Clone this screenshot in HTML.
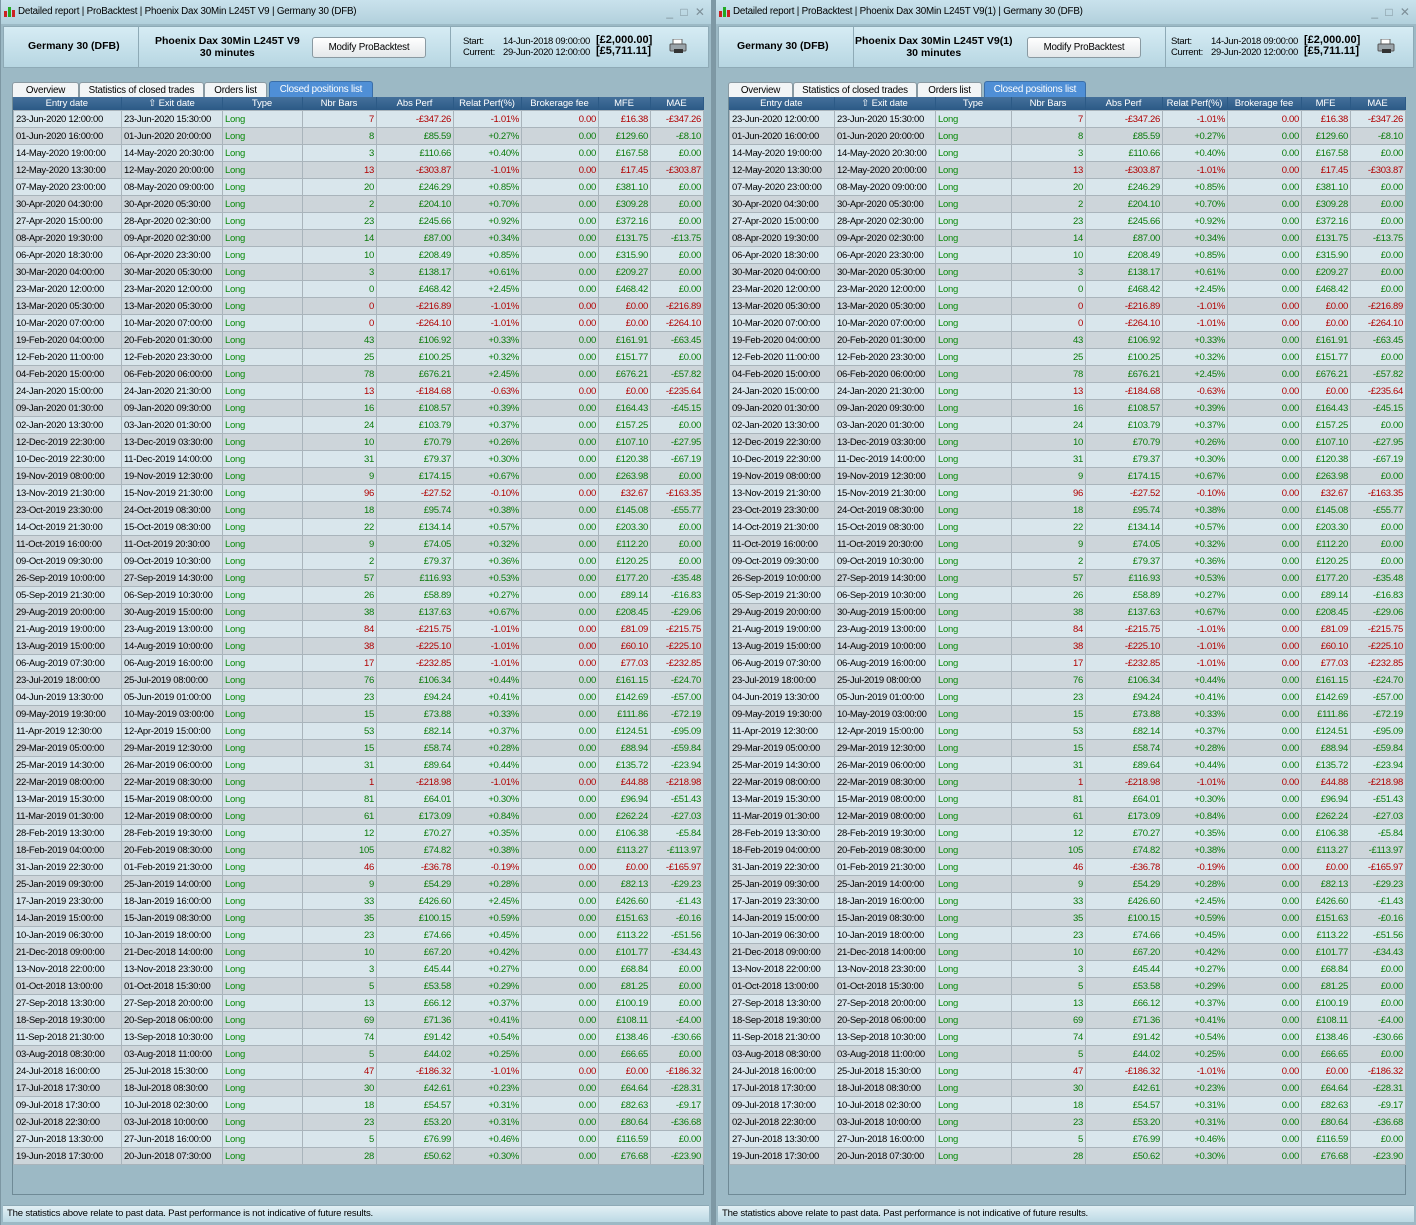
<!DOCTYPE html>
<html><head><meta charset="utf-8"><style>
*{box-sizing:border-box;margin:0;padding:0}
body{width:1416px;height:1225px;background:#9cb9c5;font-family:"Liberation Sans",sans-serif;font-size:9.5px;letter-spacing:-0.3px;color:#000;position:relative;overflow:hidden}
.pan{position:absolute;top:0;height:1225px;background:#9cb9c5;border-left:1px solid #7d97a3}
.tb{position:absolute;left:0;right:0;top:0;height:24px;background:linear-gradient(#c9e2ec,#b2d0dc);font-size:9.8px;letter-spacing:-0.2px;line-height:24px;padding-left:17px;white-space:nowrap}
.tb .ic{position:absolute;left:3px;top:7px;width:10px;height:10px}
.tb .ic i{position:absolute;bottom:0;width:3px}
.tb .wc{position:absolute;right:4px;top:0;color:#7d8f98;font-size:12px;letter-spacing:2px}
.hd{position:absolute;left:2px;right:2px;top:26px;height:42px;background:linear-gradient(#d6ecf4,#b7d6e2);border:1px solid #8eaab6}
.hd .s{position:absolute;top:0;bottom:0;border-right:1px solid #8eaab6}
.b{font-weight:bold;font-size:10.5px;letter-spacing:0}
.btn{position:absolute;top:10px;width:114px;height:21px;background:linear-gradient(#fff,#e4e8ea);border:1px solid #8a9aa2;border-radius:3px;text-align:center;line-height:19px;font-size:9.8px;letter-spacing:-0.2px}
.tabs{position:absolute;top:81px;height:17px}
.tab{position:absolute;top:1px;height:16px;background:#f2f5f6;border:1px solid #8a9aa2;border-bottom:none;border-radius:3px 3px 0 0;text-align:center;line-height:15px;font-size:9.8px;letter-spacing:-0.2px}
.tab.on{top:0;height:17px;background:#4f8fd6;color:#fff;border-color:#3a6ea8}
.box{position:absolute;top:97px;height:1098px;border:1px solid #6f8a96;border-top:none}
table{border-collapse:collapse;table-layout:fixed;font-size:9.5px;letter-spacing:-0.3px}
th{background:linear-gradient(#44709b,#2c5a86);color:#fff;font-weight:normal;height:13px;line-height:12px;padding:0;border-right:1px solid #2c5a86;white-space:nowrap;overflow:hidden;letter-spacing:-0.1px}
td{height:17px;border:1px solid #a9b4bb;padding:0 2px;white-space:nowrap;overflow:hidden;line-height:15px}
tr:nth-child(odd) td{background:#d9e6ec}
tr:nth-child(even) td{background:#cdd5da}
td:nth-child(n+4){text-align:right}
td:nth-child(3){color:#0a8a0a}
tr.g td:nth-child(n+4){color:#0a7a0a}
tr.r td:nth-child(n+4){color:#b00000}
.ft{position:absolute;left:2px;right:2px;top:1205px;height:17px;background:linear-gradient(#e2f0f5,#bcd9e4);border-top:1px solid #8eaab6;font-size:9.6px;letter-spacing:-0.2px;line-height:16px;padding-left:4px}
.pr{position:absolute;width:18px;height:14px}
.amt{position:absolute;font-weight:bold;font-size:11px;line-height:11px;letter-spacing:0}
.sm{position:absolute;top:9px;font-size:9.5px;line-height:11px}
</style></head><body>

<!-- LEFT PANEL -->
<div class="pan" style="left:0;width:711px">
 <div class="tb"><span class="ic"><i style="left:0;height:6px;background:#c22"></i><i style="left:4px;height:10px;background:#2a2"></i><i style="left:8px;height:7px;background:#c22"></i></span>Detailed report | ProBacktest | Phoenix Dax 30Min L245T V9 | Germany 30 (DFB)<span class="wc">_ □ ✕</span></div>
 <div class="hd">
  <div class="s" style="left:0;width:135px"><div class="b" style="position:absolute;left:24px;top:13px">Germany 30 (DFB)</div></div>
  <div class="s" style="left:135px;width:312px"><div class="b" style="position:absolute;left:16px;top:8px;text-align:center;line-height:12px">Phoenix Dax 30Min L245T V9<br>30 minutes</div><div class="btn" style="left:173px">Modify ProBacktest</div></div>
  <div class="sm" style="left:459px">Start:<br>Current:</div>
  <div class="sm" style="left:499px">14-Jun-2018 09:00:00<br>29-Jun-2020 12:00:00</div>
  <div class="amt" style="left:592px;top:8px">[£2,000.00]<br>[£5,711.11]</div>
  <svg class="pr" style="left:665px;top:12px" viewBox="0 0 18 14"><rect x="4" y="0" width="9" height="5" fill="#fff" stroke="#666"/><rect x="1" y="5" width="16" height="7" rx="1" fill="#9aa4aa" stroke="#555"/><rect x="5" y="10" width="9" height="4" fill="#333"/></svg>
 </div>
 <div class="tabs" style="left:11px">
  <div class="tab" style="left:0;width:67px">Overview</div>
  <div class="tab" style="left:67px;width:125px">Statistics of closed trades</div>
  <div class="tab" style="left:192px;width:63px">Orders list</div>
  <div class="tab on" style="left:257px;width:104px">Closed positions list</div>
 </div>
 <div class="box" style="left:11px;width:692px">
 <table style="width:690px">
 <colgroup><col style="width:108px"><col style="width:101px"><col style="width:80px"><col style="width:74px"><col style="width:77px"><col style="width:68px"><col style="width:77px"><col style="width:52px"><col style="width:53px"></colgroup>
 <tr><th>Entry date</th><th>⇧ Exit date</th><th>Type</th><th>Nbr Bars</th><th>Abs Perf</th><th>Relat Perf(%)</th><th>Brokerage fee</th><th>MFE</th><th>MAE</th></tr>
 </table>
 <table style="width:690px">
 <colgroup><col style="width:108px"><col style="width:101px"><col style="width:80px"><col style="width:74px"><col style="width:77px"><col style="width:68px"><col style="width:77px"><col style="width:52px"><col style="width:53px"></colgroup>
<tr class="r"><td>23-Jun-2020 12:00:00</td><td>23-Jun-2020 15:30:00</td><td>Long</td><td>7</td><td>-£347.26</td><td>-1.01%</td><td>0.00</td><td>£16.38</td><td>-£347.26</td></tr>
<tr class="g"><td>01-Jun-2020 16:00:00</td><td>01-Jun-2020 20:00:00</td><td>Long</td><td>8</td><td>£85.59</td><td>+0.27%</td><td>0.00</td><td>£129.60</td><td>-£8.10</td></tr>
<tr class="g"><td>14-May-2020 19:00:00</td><td>14-May-2020 20:30:00</td><td>Long</td><td>3</td><td>£110.66</td><td>+0.40%</td><td>0.00</td><td>£167.58</td><td>£0.00</td></tr>
<tr class="r"><td>12-May-2020 13:30:00</td><td>12-May-2020 20:00:00</td><td>Long</td><td>13</td><td>-£303.87</td><td>-1.01%</td><td>0.00</td><td>£17.45</td><td>-£303.87</td></tr>
<tr class="g"><td>07-May-2020 23:00:00</td><td>08-May-2020 09:00:00</td><td>Long</td><td>20</td><td>£246.29</td><td>+0.85%</td><td>0.00</td><td>£381.10</td><td>£0.00</td></tr>
<tr class="g"><td>30-Apr-2020 04:30:00</td><td>30-Apr-2020 05:30:00</td><td>Long</td><td>2</td><td>£204.10</td><td>+0.70%</td><td>0.00</td><td>£309.28</td><td>£0.00</td></tr>
<tr class="g"><td>27-Apr-2020 15:00:00</td><td>28-Apr-2020 02:30:00</td><td>Long</td><td>23</td><td>£245.66</td><td>+0.92%</td><td>0.00</td><td>£372.16</td><td>£0.00</td></tr>
<tr class="g"><td>08-Apr-2020 19:30:00</td><td>09-Apr-2020 02:30:00</td><td>Long</td><td>14</td><td>£87.00</td><td>+0.34%</td><td>0.00</td><td>£131.75</td><td>-£13.75</td></tr>
<tr class="g"><td>06-Apr-2020 18:30:00</td><td>06-Apr-2020 23:30:00</td><td>Long</td><td>10</td><td>£208.49</td><td>+0.85%</td><td>0.00</td><td>£315.90</td><td>£0.00</td></tr>
<tr class="g"><td>30-Mar-2020 04:00:00</td><td>30-Mar-2020 05:30:00</td><td>Long</td><td>3</td><td>£138.17</td><td>+0.61%</td><td>0.00</td><td>£209.27</td><td>£0.00</td></tr>
<tr class="g"><td>23-Mar-2020 12:00:00</td><td>23-Mar-2020 12:00:00</td><td>Long</td><td>0</td><td>£468.42</td><td>+2.45%</td><td>0.00</td><td>£468.42</td><td>£0.00</td></tr>
<tr class="r"><td>13-Mar-2020 05:30:00</td><td>13-Mar-2020 05:30:00</td><td>Long</td><td>0</td><td>-£216.89</td><td>-1.01%</td><td>0.00</td><td>£0.00</td><td>-£216.89</td></tr>
<tr class="r"><td>10-Mar-2020 07:00:00</td><td>10-Mar-2020 07:00:00</td><td>Long</td><td>0</td><td>-£264.10</td><td>-1.01%</td><td>0.00</td><td>£0.00</td><td>-£264.10</td></tr>
<tr class="g"><td>19-Feb-2020 04:00:00</td><td>20-Feb-2020 01:30:00</td><td>Long</td><td>43</td><td>£106.92</td><td>+0.33%</td><td>0.00</td><td>£161.91</td><td>-£63.45</td></tr>
<tr class="g"><td>12-Feb-2020 11:00:00</td><td>12-Feb-2020 23:30:00</td><td>Long</td><td>25</td><td>£100.25</td><td>+0.32%</td><td>0.00</td><td>£151.77</td><td>£0.00</td></tr>
<tr class="g"><td>04-Feb-2020 15:00:00</td><td>06-Feb-2020 06:00:00</td><td>Long</td><td>78</td><td>£676.21</td><td>+2.45%</td><td>0.00</td><td>£676.21</td><td>-£57.82</td></tr>
<tr class="r"><td>24-Jan-2020 15:00:00</td><td>24-Jan-2020 21:30:00</td><td>Long</td><td>13</td><td>-£184.68</td><td>-0.63%</td><td>0.00</td><td>£0.00</td><td>-£235.64</td></tr>
<tr class="g"><td>09-Jan-2020 01:30:00</td><td>09-Jan-2020 09:30:00</td><td>Long</td><td>16</td><td>£108.57</td><td>+0.39%</td><td>0.00</td><td>£164.43</td><td>-£45.15</td></tr>
<tr class="g"><td>02-Jan-2020 13:30:00</td><td>03-Jan-2020 01:30:00</td><td>Long</td><td>24</td><td>£103.79</td><td>+0.37%</td><td>0.00</td><td>£157.25</td><td>£0.00</td></tr>
<tr class="g"><td>12-Dec-2019 22:30:00</td><td>13-Dec-2019 03:30:00</td><td>Long</td><td>10</td><td>£70.79</td><td>+0.26%</td><td>0.00</td><td>£107.10</td><td>-£27.95</td></tr>
<tr class="g"><td>10-Dec-2019 22:30:00</td><td>11-Dec-2019 14:00:00</td><td>Long</td><td>31</td><td>£79.37</td><td>+0.30%</td><td>0.00</td><td>£120.38</td><td>-£67.19</td></tr>
<tr class="g"><td>19-Nov-2019 08:00:00</td><td>19-Nov-2019 12:30:00</td><td>Long</td><td>9</td><td>£174.15</td><td>+0.67%</td><td>0.00</td><td>£263.98</td><td>£0.00</td></tr>
<tr class="r"><td>13-Nov-2019 21:30:00</td><td>15-Nov-2019 21:30:00</td><td>Long</td><td>96</td><td>-£27.52</td><td>-0.10%</td><td>0.00</td><td>£32.67</td><td>-£163.35</td></tr>
<tr class="g"><td>23-Oct-2019 23:30:00</td><td>24-Oct-2019 08:30:00</td><td>Long</td><td>18</td><td>£95.74</td><td>+0.38%</td><td>0.00</td><td>£145.08</td><td>-£55.77</td></tr>
<tr class="g"><td>14-Oct-2019 21:30:00</td><td>15-Oct-2019 08:30:00</td><td>Long</td><td>22</td><td>£134.14</td><td>+0.57%</td><td>0.00</td><td>£203.30</td><td>£0.00</td></tr>
<tr class="g"><td>11-Oct-2019 16:00:00</td><td>11-Oct-2019 20:30:00</td><td>Long</td><td>9</td><td>£74.05</td><td>+0.32%</td><td>0.00</td><td>£112.20</td><td>£0.00</td></tr>
<tr class="g"><td>09-Oct-2019 09:30:00</td><td>09-Oct-2019 10:30:00</td><td>Long</td><td>2</td><td>£79.37</td><td>+0.36%</td><td>0.00</td><td>£120.25</td><td>£0.00</td></tr>
<tr class="g"><td>26-Sep-2019 10:00:00</td><td>27-Sep-2019 14:30:00</td><td>Long</td><td>57</td><td>£116.93</td><td>+0.53%</td><td>0.00</td><td>£177.20</td><td>-£35.48</td></tr>
<tr class="g"><td>05-Sep-2019 21:30:00</td><td>06-Sep-2019 10:30:00</td><td>Long</td><td>26</td><td>£58.89</td><td>+0.27%</td><td>0.00</td><td>£89.14</td><td>-£16.83</td></tr>
<tr class="g"><td>29-Aug-2019 20:00:00</td><td>30-Aug-2019 15:00:00</td><td>Long</td><td>38</td><td>£137.63</td><td>+0.67%</td><td>0.00</td><td>£208.45</td><td>-£29.06</td></tr>
<tr class="r"><td>21-Aug-2019 19:00:00</td><td>23-Aug-2019 13:00:00</td><td>Long</td><td>84</td><td>-£215.75</td><td>-1.01%</td><td>0.00</td><td>£81.09</td><td>-£215.75</td></tr>
<tr class="r"><td>13-Aug-2019 15:00:00</td><td>14-Aug-2019 10:00:00</td><td>Long</td><td>38</td><td>-£225.10</td><td>-1.01%</td><td>0.00</td><td>£60.10</td><td>-£225.10</td></tr>
<tr class="r"><td>06-Aug-2019 07:30:00</td><td>06-Aug-2019 16:00:00</td><td>Long</td><td>17</td><td>-£232.85</td><td>-1.01%</td><td>0.00</td><td>£77.03</td><td>-£232.85</td></tr>
<tr class="g"><td>23-Jul-2019 18:00:00</td><td>25-Jul-2019 08:00:00</td><td>Long</td><td>76</td><td>£106.34</td><td>+0.44%</td><td>0.00</td><td>£161.15</td><td>-£24.70</td></tr>
<tr class="g"><td>04-Jun-2019 13:30:00</td><td>05-Jun-2019 01:00:00</td><td>Long</td><td>23</td><td>£94.24</td><td>+0.41%</td><td>0.00</td><td>£142.69</td><td>-£57.00</td></tr>
<tr class="g"><td>09-May-2019 19:30:00</td><td>10-May-2019 03:00:00</td><td>Long</td><td>15</td><td>£73.88</td><td>+0.33%</td><td>0.00</td><td>£111.86</td><td>-£72.19</td></tr>
<tr class="g"><td>11-Apr-2019 12:30:00</td><td>12-Apr-2019 15:00:00</td><td>Long</td><td>53</td><td>£82.14</td><td>+0.37%</td><td>0.00</td><td>£124.51</td><td>-£95.09</td></tr>
<tr class="g"><td>29-Mar-2019 05:00:00</td><td>29-Mar-2019 12:30:00</td><td>Long</td><td>15</td><td>£58.74</td><td>+0.28%</td><td>0.00</td><td>£88.94</td><td>-£59.84</td></tr>
<tr class="g"><td>25-Mar-2019 14:30:00</td><td>26-Mar-2019 06:00:00</td><td>Long</td><td>31</td><td>£89.64</td><td>+0.44%</td><td>0.00</td><td>£135.72</td><td>-£23.94</td></tr>
<tr class="r"><td>22-Mar-2019 08:00:00</td><td>22-Mar-2019 08:30:00</td><td>Long</td><td>1</td><td>-£218.98</td><td>-1.01%</td><td>0.00</td><td>£44.88</td><td>-£218.98</td></tr>
<tr class="g"><td>13-Mar-2019 15:30:00</td><td>15-Mar-2019 08:00:00</td><td>Long</td><td>81</td><td>£64.01</td><td>+0.30%</td><td>0.00</td><td>£96.94</td><td>-£51.43</td></tr>
<tr class="g"><td>11-Mar-2019 01:30:00</td><td>12-Mar-2019 08:00:00</td><td>Long</td><td>61</td><td>£173.09</td><td>+0.84%</td><td>0.00</td><td>£262.24</td><td>-£27.03</td></tr>
<tr class="g"><td>28-Feb-2019 13:30:00</td><td>28-Feb-2019 19:30:00</td><td>Long</td><td>12</td><td>£70.27</td><td>+0.35%</td><td>0.00</td><td>£106.38</td><td>-£5.84</td></tr>
<tr class="g"><td>18-Feb-2019 04:00:00</td><td>20-Feb-2019 08:30:00</td><td>Long</td><td>105</td><td>£74.82</td><td>+0.38%</td><td>0.00</td><td>£113.27</td><td>-£113.97</td></tr>
<tr class="r"><td>31-Jan-2019 22:30:00</td><td>01-Feb-2019 21:30:00</td><td>Long</td><td>46</td><td>-£36.78</td><td>-0.19%</td><td>0.00</td><td>£0.00</td><td>-£165.97</td></tr>
<tr class="g"><td>25-Jan-2019 09:30:00</td><td>25-Jan-2019 14:00:00</td><td>Long</td><td>9</td><td>£54.29</td><td>+0.28%</td><td>0.00</td><td>£82.13</td><td>-£29.23</td></tr>
<tr class="g"><td>17-Jan-2019 23:30:00</td><td>18-Jan-2019 16:00:00</td><td>Long</td><td>33</td><td>£426.60</td><td>+2.45%</td><td>0.00</td><td>£426.60</td><td>-£1.43</td></tr>
<tr class="g"><td>14-Jan-2019 15:00:00</td><td>15-Jan-2019 08:30:00</td><td>Long</td><td>35</td><td>£100.15</td><td>+0.59%</td><td>0.00</td><td>£151.63</td><td>-£0.16</td></tr>
<tr class="g"><td>10-Jan-2019 06:30:00</td><td>10-Jan-2019 18:00:00</td><td>Long</td><td>23</td><td>£74.66</td><td>+0.45%</td><td>0.00</td><td>£113.22</td><td>-£51.56</td></tr>
<tr class="g"><td>21-Dec-2018 09:00:00</td><td>21-Dec-2018 14:00:00</td><td>Long</td><td>10</td><td>£67.20</td><td>+0.42%</td><td>0.00</td><td>£101.77</td><td>-£34.43</td></tr>
<tr class="g"><td>13-Nov-2018 22:00:00</td><td>13-Nov-2018 23:30:00</td><td>Long</td><td>3</td><td>£45.44</td><td>+0.27%</td><td>0.00</td><td>£68.84</td><td>£0.00</td></tr>
<tr class="g"><td>01-Oct-2018 13:00:00</td><td>01-Oct-2018 15:30:00</td><td>Long</td><td>5</td><td>£53.58</td><td>+0.29%</td><td>0.00</td><td>£81.25</td><td>£0.00</td></tr>
<tr class="g"><td>27-Sep-2018 13:30:00</td><td>27-Sep-2018 20:00:00</td><td>Long</td><td>13</td><td>£66.12</td><td>+0.37%</td><td>0.00</td><td>£100.19</td><td>£0.00</td></tr>
<tr class="g"><td>18-Sep-2018 19:30:00</td><td>20-Sep-2018 06:00:00</td><td>Long</td><td>69</td><td>£71.36</td><td>+0.41%</td><td>0.00</td><td>£108.11</td><td>-£4.00</td></tr>
<tr class="g"><td>11-Sep-2018 21:30:00</td><td>13-Sep-2018 10:30:00</td><td>Long</td><td>74</td><td>£91.42</td><td>+0.54%</td><td>0.00</td><td>£138.46</td><td>-£30.66</td></tr>
<tr class="g"><td>03-Aug-2018 08:30:00</td><td>03-Aug-2018 11:00:00</td><td>Long</td><td>5</td><td>£44.02</td><td>+0.25%</td><td>0.00</td><td>£66.65</td><td>£0.00</td></tr>
<tr class="r"><td>24-Jul-2018 16:00:00</td><td>25-Jul-2018 15:30:00</td><td>Long</td><td>47</td><td>-£186.32</td><td>-1.01%</td><td>0.00</td><td>£0.00</td><td>-£186.32</td></tr>
<tr class="g"><td>17-Jul-2018 17:30:00</td><td>18-Jul-2018 08:30:00</td><td>Long</td><td>30</td><td>£42.61</td><td>+0.23%</td><td>0.00</td><td>£64.64</td><td>-£28.31</td></tr>
<tr class="g"><td>09-Jul-2018 17:30:00</td><td>10-Jul-2018 02:30:00</td><td>Long</td><td>18</td><td>£54.57</td><td>+0.31%</td><td>0.00</td><td>£82.63</td><td>-£9.17</td></tr>
<tr class="g"><td>02-Jul-2018 22:30:00</td><td>03-Jul-2018 10:00:00</td><td>Long</td><td>23</td><td>£53.20</td><td>+0.31%</td><td>0.00</td><td>£80.64</td><td>-£36.68</td></tr>
<tr class="g"><td>27-Jun-2018 13:30:00</td><td>27-Jun-2018 16:00:00</td><td>Long</td><td>5</td><td>£76.99</td><td>+0.46%</td><td>0.00</td><td>£116.59</td><td>£0.00</td></tr>
<tr class="g"><td>19-Jun-2018 17:30:00</td><td>20-Jun-2018 07:30:00</td><td>Long</td><td>28</td><td>£50.62</td><td>+0.30%</td><td>0.00</td><td>£76.68</td><td>-£23.90</td></tr>
 </table>
 </div>
 <div class="ft">The statistics above relate to past data. Past performance is not indicative of future results.</div>
</div>

<div style="position:absolute;left:711px;top:0;width:4px;height:1225px;background:#7e98a4"></div>

<!-- RIGHT PANEL -->
<div class="pan" style="left:715px;width:701px">
 <div class="tb"><span class="ic"><i style="left:0;height:6px;background:#c22"></i><i style="left:4px;height:10px;background:#2a2"></i><i style="left:8px;height:7px;background:#c22"></i></span>Detailed report | ProBacktest | Phoenix Dax 30Min L245T V9(1) | Germany 30 (DFB)<span class="wc">_ □ ✕</span></div>
 <div class="hd">
  <div class="s" style="left:0;width:135px"><div class="b" style="position:absolute;left:18px;top:13px">Germany 30 (DFB)</div></div>
  <div class="s" style="left:135px;width:312px"><div class="b" style="position:absolute;left:1px;top:8px;text-align:center;line-height:12px">Phoenix Dax 30Min L245T V9(1)<br>30 minutes</div><div class="btn" style="left:173px">Modify ProBacktest</div></div>
  <div class="sm" style="left:452px">Start:<br>Current:</div>
  <div class="sm" style="left:492px">14-Jun-2018 09:00:00<br>29-Jun-2020 12:00:00</div>
  <div class="amt" style="left:585px;top:8px">[£2,000.00]<br>[£5,711.11]</div>
  <svg class="pr" style="left:658px;top:12px" viewBox="0 0 18 14"><rect x="4" y="0" width="9" height="5" fill="#fff" stroke="#666"/><rect x="1" y="5" width="16" height="7" rx="1" fill="#9aa4aa" stroke="#555"/><rect x="5" y="10" width="9" height="4" fill="#333"/></svg>
 </div>
 <div class="tabs" style="left:12px">
  <div class="tab" style="left:0;width:65px">Overview</div>
  <div class="tab" style="left:65px;width:124px">Statistics of closed trades</div>
  <div class="tab" style="left:189px;width:65px">Orders list</div>
  <div class="tab on" style="left:256px;width:102px">Closed positions list</div>
 </div>
 <div class="box" style="left:12px;width:678px">
 <table style="width:676px">
 <colgroup><col style="width:105px"><col style="width:101px"><col style="width:76px"><col style="width:74px"><col style="width:77px"><col style="width:65px"><col style="width:74px"><col style="width:49px"><col style="width:55px"></colgroup>
 <tr><th>Entry date</th><th>⇧ Exit date</th><th>Type</th><th>Nbr Bars</th><th>Abs Perf</th><th>Relat Perf(%)</th><th>Brokerage fee</th><th>MFE</th><th>MAE</th></tr>
 </table>
 <table style="width:676px">
 <colgroup><col style="width:105px"><col style="width:101px"><col style="width:76px"><col style="width:74px"><col style="width:77px"><col style="width:65px"><col style="width:74px"><col style="width:49px"><col style="width:55px"></colgroup>
<tr class="r"><td>23-Jun-2020 12:00:00</td><td>23-Jun-2020 15:30:00</td><td>Long</td><td>7</td><td>-£347.26</td><td>-1.01%</td><td>0.00</td><td>£16.38</td><td>-£347.26</td></tr>
<tr class="g"><td>01-Jun-2020 16:00:00</td><td>01-Jun-2020 20:00:00</td><td>Long</td><td>8</td><td>£85.59</td><td>+0.27%</td><td>0.00</td><td>£129.60</td><td>-£8.10</td></tr>
<tr class="g"><td>14-May-2020 19:00:00</td><td>14-May-2020 20:30:00</td><td>Long</td><td>3</td><td>£110.66</td><td>+0.40%</td><td>0.00</td><td>£167.58</td><td>£0.00</td></tr>
<tr class="r"><td>12-May-2020 13:30:00</td><td>12-May-2020 20:00:00</td><td>Long</td><td>13</td><td>-£303.87</td><td>-1.01%</td><td>0.00</td><td>£17.45</td><td>-£303.87</td></tr>
<tr class="g"><td>07-May-2020 23:00:00</td><td>08-May-2020 09:00:00</td><td>Long</td><td>20</td><td>£246.29</td><td>+0.85%</td><td>0.00</td><td>£381.10</td><td>£0.00</td></tr>
<tr class="g"><td>30-Apr-2020 04:30:00</td><td>30-Apr-2020 05:30:00</td><td>Long</td><td>2</td><td>£204.10</td><td>+0.70%</td><td>0.00</td><td>£309.28</td><td>£0.00</td></tr>
<tr class="g"><td>27-Apr-2020 15:00:00</td><td>28-Apr-2020 02:30:00</td><td>Long</td><td>23</td><td>£245.66</td><td>+0.92%</td><td>0.00</td><td>£372.16</td><td>£0.00</td></tr>
<tr class="g"><td>08-Apr-2020 19:30:00</td><td>09-Apr-2020 02:30:00</td><td>Long</td><td>14</td><td>£87.00</td><td>+0.34%</td><td>0.00</td><td>£131.75</td><td>-£13.75</td></tr>
<tr class="g"><td>06-Apr-2020 18:30:00</td><td>06-Apr-2020 23:30:00</td><td>Long</td><td>10</td><td>£208.49</td><td>+0.85%</td><td>0.00</td><td>£315.90</td><td>£0.00</td></tr>
<tr class="g"><td>30-Mar-2020 04:00:00</td><td>30-Mar-2020 05:30:00</td><td>Long</td><td>3</td><td>£138.17</td><td>+0.61%</td><td>0.00</td><td>£209.27</td><td>£0.00</td></tr>
<tr class="g"><td>23-Mar-2020 12:00:00</td><td>23-Mar-2020 12:00:00</td><td>Long</td><td>0</td><td>£468.42</td><td>+2.45%</td><td>0.00</td><td>£468.42</td><td>£0.00</td></tr>
<tr class="r"><td>13-Mar-2020 05:30:00</td><td>13-Mar-2020 05:30:00</td><td>Long</td><td>0</td><td>-£216.89</td><td>-1.01%</td><td>0.00</td><td>£0.00</td><td>-£216.89</td></tr>
<tr class="r"><td>10-Mar-2020 07:00:00</td><td>10-Mar-2020 07:00:00</td><td>Long</td><td>0</td><td>-£264.10</td><td>-1.01%</td><td>0.00</td><td>£0.00</td><td>-£264.10</td></tr>
<tr class="g"><td>19-Feb-2020 04:00:00</td><td>20-Feb-2020 01:30:00</td><td>Long</td><td>43</td><td>£106.92</td><td>+0.33%</td><td>0.00</td><td>£161.91</td><td>-£63.45</td></tr>
<tr class="g"><td>12-Feb-2020 11:00:00</td><td>12-Feb-2020 23:30:00</td><td>Long</td><td>25</td><td>£100.25</td><td>+0.32%</td><td>0.00</td><td>£151.77</td><td>£0.00</td></tr>
<tr class="g"><td>04-Feb-2020 15:00:00</td><td>06-Feb-2020 06:00:00</td><td>Long</td><td>78</td><td>£676.21</td><td>+2.45%</td><td>0.00</td><td>£676.21</td><td>-£57.82</td></tr>
<tr class="r"><td>24-Jan-2020 15:00:00</td><td>24-Jan-2020 21:30:00</td><td>Long</td><td>13</td><td>-£184.68</td><td>-0.63%</td><td>0.00</td><td>£0.00</td><td>-£235.64</td></tr>
<tr class="g"><td>09-Jan-2020 01:30:00</td><td>09-Jan-2020 09:30:00</td><td>Long</td><td>16</td><td>£108.57</td><td>+0.39%</td><td>0.00</td><td>£164.43</td><td>-£45.15</td></tr>
<tr class="g"><td>02-Jan-2020 13:30:00</td><td>03-Jan-2020 01:30:00</td><td>Long</td><td>24</td><td>£103.79</td><td>+0.37%</td><td>0.00</td><td>£157.25</td><td>£0.00</td></tr>
<tr class="g"><td>12-Dec-2019 22:30:00</td><td>13-Dec-2019 03:30:00</td><td>Long</td><td>10</td><td>£70.79</td><td>+0.26%</td><td>0.00</td><td>£107.10</td><td>-£27.95</td></tr>
<tr class="g"><td>10-Dec-2019 22:30:00</td><td>11-Dec-2019 14:00:00</td><td>Long</td><td>31</td><td>£79.37</td><td>+0.30%</td><td>0.00</td><td>£120.38</td><td>-£67.19</td></tr>
<tr class="g"><td>19-Nov-2019 08:00:00</td><td>19-Nov-2019 12:30:00</td><td>Long</td><td>9</td><td>£174.15</td><td>+0.67%</td><td>0.00</td><td>£263.98</td><td>£0.00</td></tr>
<tr class="r"><td>13-Nov-2019 21:30:00</td><td>15-Nov-2019 21:30:00</td><td>Long</td><td>96</td><td>-£27.52</td><td>-0.10%</td><td>0.00</td><td>£32.67</td><td>-£163.35</td></tr>
<tr class="g"><td>23-Oct-2019 23:30:00</td><td>24-Oct-2019 08:30:00</td><td>Long</td><td>18</td><td>£95.74</td><td>+0.38%</td><td>0.00</td><td>£145.08</td><td>-£55.77</td></tr>
<tr class="g"><td>14-Oct-2019 21:30:00</td><td>15-Oct-2019 08:30:00</td><td>Long</td><td>22</td><td>£134.14</td><td>+0.57%</td><td>0.00</td><td>£203.30</td><td>£0.00</td></tr>
<tr class="g"><td>11-Oct-2019 16:00:00</td><td>11-Oct-2019 20:30:00</td><td>Long</td><td>9</td><td>£74.05</td><td>+0.32%</td><td>0.00</td><td>£112.20</td><td>£0.00</td></tr>
<tr class="g"><td>09-Oct-2019 09:30:00</td><td>09-Oct-2019 10:30:00</td><td>Long</td><td>2</td><td>£79.37</td><td>+0.36%</td><td>0.00</td><td>£120.25</td><td>£0.00</td></tr>
<tr class="g"><td>26-Sep-2019 10:00:00</td><td>27-Sep-2019 14:30:00</td><td>Long</td><td>57</td><td>£116.93</td><td>+0.53%</td><td>0.00</td><td>£177.20</td><td>-£35.48</td></tr>
<tr class="g"><td>05-Sep-2019 21:30:00</td><td>06-Sep-2019 10:30:00</td><td>Long</td><td>26</td><td>£58.89</td><td>+0.27%</td><td>0.00</td><td>£89.14</td><td>-£16.83</td></tr>
<tr class="g"><td>29-Aug-2019 20:00:00</td><td>30-Aug-2019 15:00:00</td><td>Long</td><td>38</td><td>£137.63</td><td>+0.67%</td><td>0.00</td><td>£208.45</td><td>-£29.06</td></tr>
<tr class="r"><td>21-Aug-2019 19:00:00</td><td>23-Aug-2019 13:00:00</td><td>Long</td><td>84</td><td>-£215.75</td><td>-1.01%</td><td>0.00</td><td>£81.09</td><td>-£215.75</td></tr>
<tr class="r"><td>13-Aug-2019 15:00:00</td><td>14-Aug-2019 10:00:00</td><td>Long</td><td>38</td><td>-£225.10</td><td>-1.01%</td><td>0.00</td><td>£60.10</td><td>-£225.10</td></tr>
<tr class="r"><td>06-Aug-2019 07:30:00</td><td>06-Aug-2019 16:00:00</td><td>Long</td><td>17</td><td>-£232.85</td><td>-1.01%</td><td>0.00</td><td>£77.03</td><td>-£232.85</td></tr>
<tr class="g"><td>23-Jul-2019 18:00:00</td><td>25-Jul-2019 08:00:00</td><td>Long</td><td>76</td><td>£106.34</td><td>+0.44%</td><td>0.00</td><td>£161.15</td><td>-£24.70</td></tr>
<tr class="g"><td>04-Jun-2019 13:30:00</td><td>05-Jun-2019 01:00:00</td><td>Long</td><td>23</td><td>£94.24</td><td>+0.41%</td><td>0.00</td><td>£142.69</td><td>-£57.00</td></tr>
<tr class="g"><td>09-May-2019 19:30:00</td><td>10-May-2019 03:00:00</td><td>Long</td><td>15</td><td>£73.88</td><td>+0.33%</td><td>0.00</td><td>£111.86</td><td>-£72.19</td></tr>
<tr class="g"><td>11-Apr-2019 12:30:00</td><td>12-Apr-2019 15:00:00</td><td>Long</td><td>53</td><td>£82.14</td><td>+0.37%</td><td>0.00</td><td>£124.51</td><td>-£95.09</td></tr>
<tr class="g"><td>29-Mar-2019 05:00:00</td><td>29-Mar-2019 12:30:00</td><td>Long</td><td>15</td><td>£58.74</td><td>+0.28%</td><td>0.00</td><td>£88.94</td><td>-£59.84</td></tr>
<tr class="g"><td>25-Mar-2019 14:30:00</td><td>26-Mar-2019 06:00:00</td><td>Long</td><td>31</td><td>£89.64</td><td>+0.44%</td><td>0.00</td><td>£135.72</td><td>-£23.94</td></tr>
<tr class="r"><td>22-Mar-2019 08:00:00</td><td>22-Mar-2019 08:30:00</td><td>Long</td><td>1</td><td>-£218.98</td><td>-1.01%</td><td>0.00</td><td>£44.88</td><td>-£218.98</td></tr>
<tr class="g"><td>13-Mar-2019 15:30:00</td><td>15-Mar-2019 08:00:00</td><td>Long</td><td>81</td><td>£64.01</td><td>+0.30%</td><td>0.00</td><td>£96.94</td><td>-£51.43</td></tr>
<tr class="g"><td>11-Mar-2019 01:30:00</td><td>12-Mar-2019 08:00:00</td><td>Long</td><td>61</td><td>£173.09</td><td>+0.84%</td><td>0.00</td><td>£262.24</td><td>-£27.03</td></tr>
<tr class="g"><td>28-Feb-2019 13:30:00</td><td>28-Feb-2019 19:30:00</td><td>Long</td><td>12</td><td>£70.27</td><td>+0.35%</td><td>0.00</td><td>£106.38</td><td>-£5.84</td></tr>
<tr class="g"><td>18-Feb-2019 04:00:00</td><td>20-Feb-2019 08:30:00</td><td>Long</td><td>105</td><td>£74.82</td><td>+0.38%</td><td>0.00</td><td>£113.27</td><td>-£113.97</td></tr>
<tr class="r"><td>31-Jan-2019 22:30:00</td><td>01-Feb-2019 21:30:00</td><td>Long</td><td>46</td><td>-£36.78</td><td>-0.19%</td><td>0.00</td><td>£0.00</td><td>-£165.97</td></tr>
<tr class="g"><td>25-Jan-2019 09:30:00</td><td>25-Jan-2019 14:00:00</td><td>Long</td><td>9</td><td>£54.29</td><td>+0.28%</td><td>0.00</td><td>£82.13</td><td>-£29.23</td></tr>
<tr class="g"><td>17-Jan-2019 23:30:00</td><td>18-Jan-2019 16:00:00</td><td>Long</td><td>33</td><td>£426.60</td><td>+2.45%</td><td>0.00</td><td>£426.60</td><td>-£1.43</td></tr>
<tr class="g"><td>14-Jan-2019 15:00:00</td><td>15-Jan-2019 08:30:00</td><td>Long</td><td>35</td><td>£100.15</td><td>+0.59%</td><td>0.00</td><td>£151.63</td><td>-£0.16</td></tr>
<tr class="g"><td>10-Jan-2019 06:30:00</td><td>10-Jan-2019 18:00:00</td><td>Long</td><td>23</td><td>£74.66</td><td>+0.45%</td><td>0.00</td><td>£113.22</td><td>-£51.56</td></tr>
<tr class="g"><td>21-Dec-2018 09:00:00</td><td>21-Dec-2018 14:00:00</td><td>Long</td><td>10</td><td>£67.20</td><td>+0.42%</td><td>0.00</td><td>£101.77</td><td>-£34.43</td></tr>
<tr class="g"><td>13-Nov-2018 22:00:00</td><td>13-Nov-2018 23:30:00</td><td>Long</td><td>3</td><td>£45.44</td><td>+0.27%</td><td>0.00</td><td>£68.84</td><td>£0.00</td></tr>
<tr class="g"><td>01-Oct-2018 13:00:00</td><td>01-Oct-2018 15:30:00</td><td>Long</td><td>5</td><td>£53.58</td><td>+0.29%</td><td>0.00</td><td>£81.25</td><td>£0.00</td></tr>
<tr class="g"><td>27-Sep-2018 13:30:00</td><td>27-Sep-2018 20:00:00</td><td>Long</td><td>13</td><td>£66.12</td><td>+0.37%</td><td>0.00</td><td>£100.19</td><td>£0.00</td></tr>
<tr class="g"><td>18-Sep-2018 19:30:00</td><td>20-Sep-2018 06:00:00</td><td>Long</td><td>69</td><td>£71.36</td><td>+0.41%</td><td>0.00</td><td>£108.11</td><td>-£4.00</td></tr>
<tr class="g"><td>11-Sep-2018 21:30:00</td><td>13-Sep-2018 10:30:00</td><td>Long</td><td>74</td><td>£91.42</td><td>+0.54%</td><td>0.00</td><td>£138.46</td><td>-£30.66</td></tr>
<tr class="g"><td>03-Aug-2018 08:30:00</td><td>03-Aug-2018 11:00:00</td><td>Long</td><td>5</td><td>£44.02</td><td>+0.25%</td><td>0.00</td><td>£66.65</td><td>£0.00</td></tr>
<tr class="r"><td>24-Jul-2018 16:00:00</td><td>25-Jul-2018 15:30:00</td><td>Long</td><td>47</td><td>-£186.32</td><td>-1.01%</td><td>0.00</td><td>£0.00</td><td>-£186.32</td></tr>
<tr class="g"><td>17-Jul-2018 17:30:00</td><td>18-Jul-2018 08:30:00</td><td>Long</td><td>30</td><td>£42.61</td><td>+0.23%</td><td>0.00</td><td>£64.64</td><td>-£28.31</td></tr>
<tr class="g"><td>09-Jul-2018 17:30:00</td><td>10-Jul-2018 02:30:00</td><td>Long</td><td>18</td><td>£54.57</td><td>+0.31%</td><td>0.00</td><td>£82.63</td><td>-£9.17</td></tr>
<tr class="g"><td>02-Jul-2018 22:30:00</td><td>03-Jul-2018 10:00:00</td><td>Long</td><td>23</td><td>£53.20</td><td>+0.31%</td><td>0.00</td><td>£80.64</td><td>-£36.68</td></tr>
<tr class="g"><td>27-Jun-2018 13:30:00</td><td>27-Jun-2018 16:00:00</td><td>Long</td><td>5</td><td>£76.99</td><td>+0.46%</td><td>0.00</td><td>£116.59</td><td>£0.00</td></tr>
<tr class="g"><td>19-Jun-2018 17:30:00</td><td>20-Jun-2018 07:30:00</td><td>Long</td><td>28</td><td>£50.62</td><td>+0.30%</td><td>0.00</td><td>£76.68</td><td>-£23.90</td></tr>
 </table>
 </div>
 <div class="ft">The statistics above relate to past data. Past performance is not indicative of future results.</div>
</div>
</body></html>
